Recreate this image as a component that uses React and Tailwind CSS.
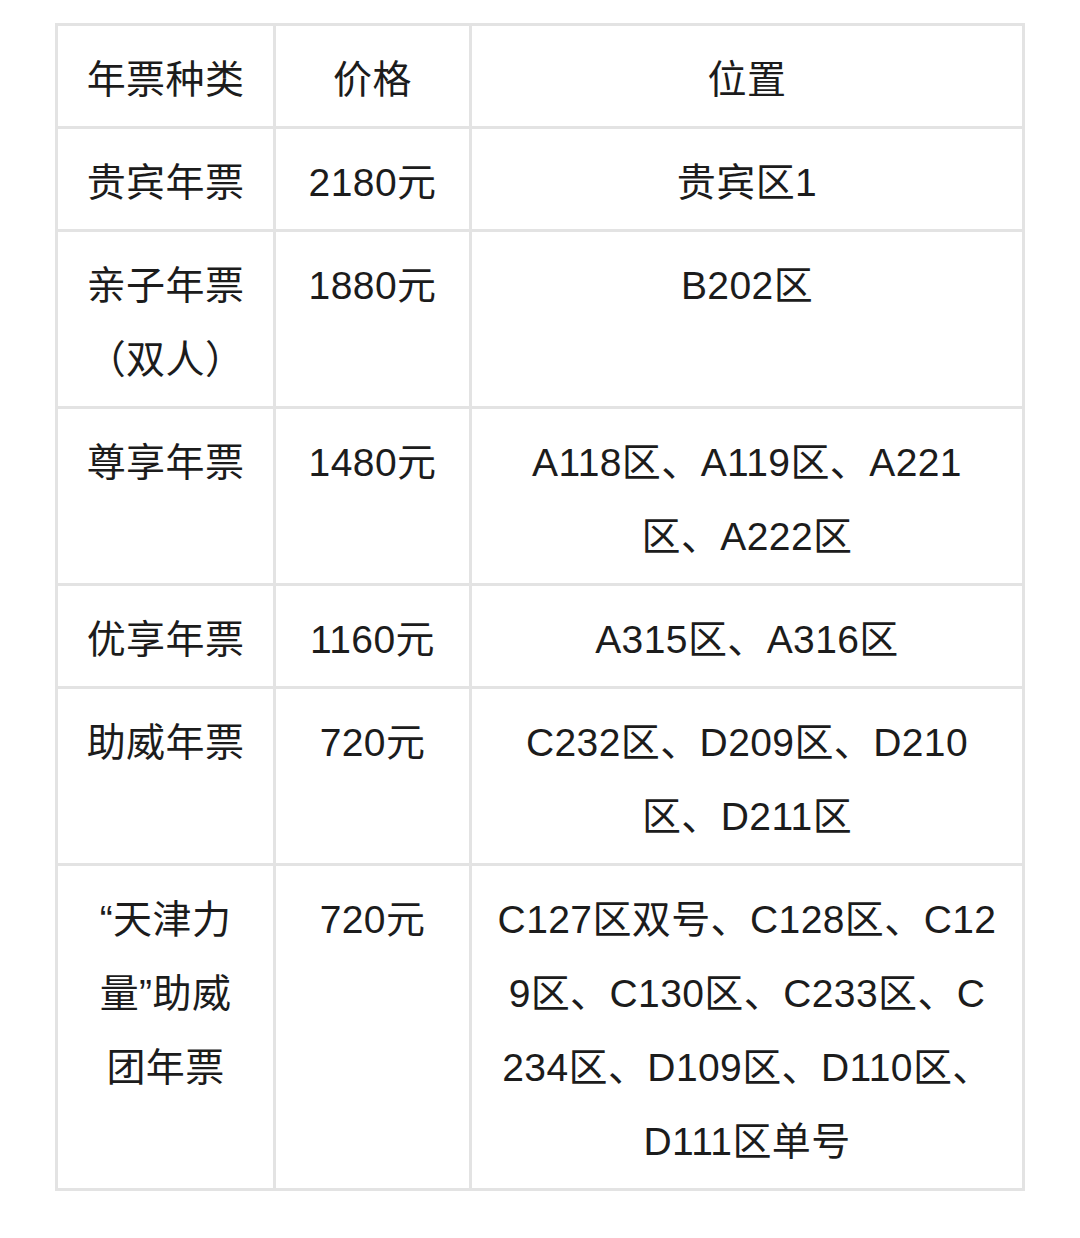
const rows = [
  { kind: ['年票种类'], price: ['价格'], place: ['位置'] },
  { kind: ['贵宾年票'], price: ['2180元'], place: ['贵宾区1'] },
  { kind: ['亲子年票', '（双人）'], price: ['1880元'], place: ['B202区'] },
  { kind: ['尊享年票'], price: ['1480元'], place: ['A118区、A119区、A221', '区、A222区'] },
  { kind: ['优享年票'], price: ['1160元'], place: ['A315区、A316区'] },
  { kind: ['助威年票'], price: ['720元'], place: ['C232区、D209区、D210', '区、D211区'] },
  {
    kind: ['“天津力', '量”助威', '团年票'],
    price: ['720元'],
    place: ['C127区双号、C128区、C12', '9区、C130区、C233区、C', '234区、D109区、D110区、', 'D111区单号'],
  },
]

function Cell({ lines }) {
  return (
    <div className="bg-white px-2 pt-[17px] pb-[9px] text-center">
      {lines.map((l, i) => (
        <div key={i} className="whitespace-nowrap">{l}</div>
      ))}
    </div>
  )
}

export default function App() {
  return (
    <div className="min-h-[1238px] bg-white pt-[23px]">
      <div
        className="ml-[55px] grid w-[970px] grid-cols-[215px_193px_550px] gap-[3px] bg-[#e3e3e3] p-[3px] text-[39px] leading-[74px] tracking-[0.4px] text-[#1c1c1c]"
        style={{ fontFamily: '"Liberation Sans", "Noto Sans CJK SC", sans-serif' }}
      >
        {rows.map((r, i) => (
          <div key={i} className="contents">
            <Cell lines={r.kind} />
            <Cell lines={r.price} />
            <Cell lines={r.place} />
          </div>
        ))}
      </div>
    </div>
  )
}
